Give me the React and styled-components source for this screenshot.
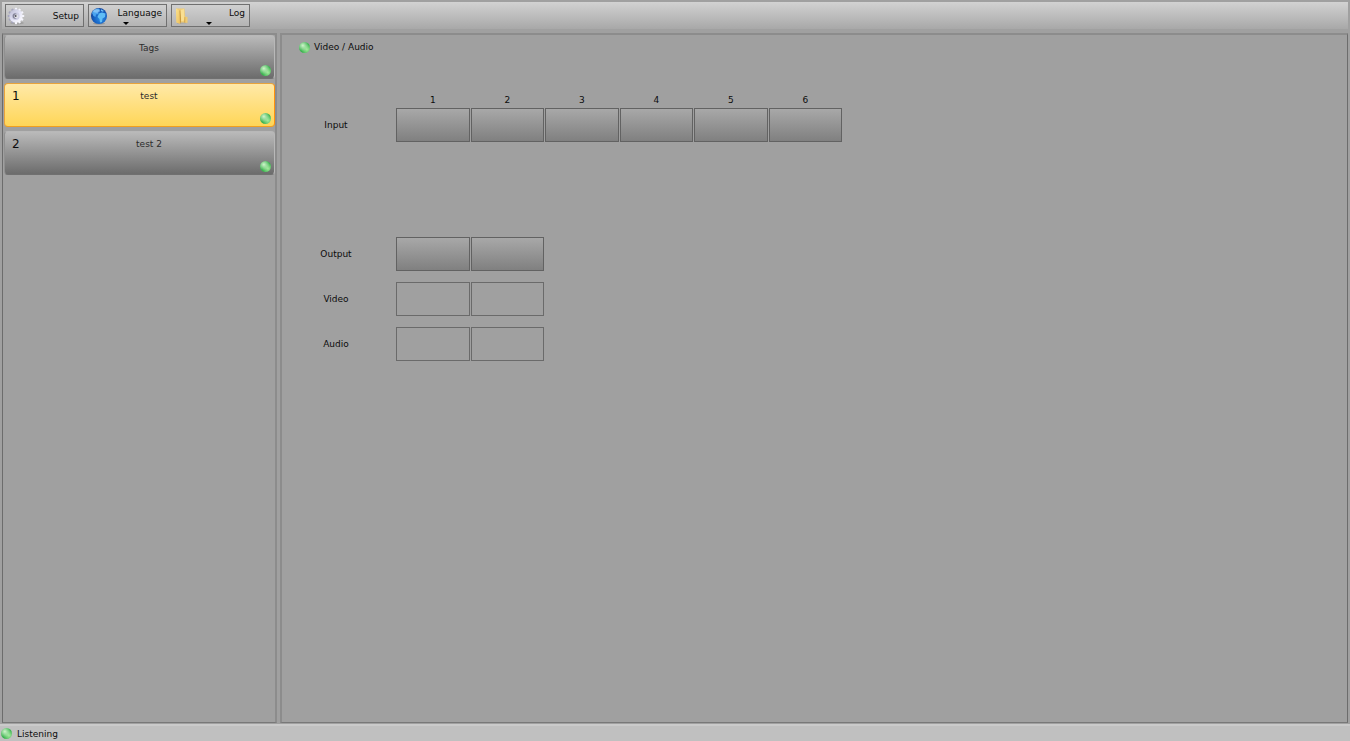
import React, { useState } from "react";
import styled, { createGlobalStyle, css } from "styled-components";

const GlobalStyle = createGlobalStyle`
  * {
    box-sizing: border-box;
  }
  body {
    margin: 0;
    background: #a0a0a0;
    color: #0c0c0c;
    font-family: Verdana, "DejaVu Sans", sans-serif;
    font-size: 9px;
    line-height: 12px;
  }
  button {
    font: inherit;
    color: inherit;
    cursor: pointer;
  }
`;

const tags = [
  { id: "tags", number: "", title: "Tags" },
  { id: "1", number: "1", title: "test" },
  { id: "2", number: "2", title: "test 2" },
];

const inputs = [1, 2, 3, 4, 5, 6];
const outputs = [1, 2];

function GearIcon() {
  const teeth = Array.from({ length: 12 }, (_, i) => i * 30);
  return (
    <svg width="18" height="18" viewBox="0 0 18 18">
      <defs>
        <linearGradient id="gear" x1="0" y1="0" x2="1" y2="1">
          <stop offset="0" stopColor="#b4b4cc" />
          <stop offset="0.5" stopColor="#e4e4f6" />
          <stop offset="1" stopColor="#ffffff" />
        </linearGradient>
      </defs>
      <ellipse cx="10" cy="16" rx="7" ry="1.5" fill="#8c8c8c" opacity="0.5" />
      {teeth.map((angle) => (
        <rect
          key={angle}
          x="7.9"
          y="0.8"
          width="2.2"
          height="4"
          rx="0.6"
          fill={angle > 190 ? "#a5a5bd" : "#f4f4fc"}
          transform={`rotate(${angle} 9 9)`}
        />
      ))}
      <circle cx="9" cy="9" r="6.7" fill="url(#gear)" />
      <circle cx="8.6" cy="9" r="4" fill="#cfcfe4" />
      <ellipse cx="8" cy="9" rx="2.4" ry="2.8" fill="#85859a" />
      <circle cx="9.2" cy="9.3" r="2" fill="#e2e2ea" />
      <circle cx="8.6" cy="9" r="1" fill="#55555f" />
    </svg>
  );
}

function GlobeIcon() {
  return (
    <svg width="18" height="18" viewBox="0 0 18 18">
      <defs>
        <radialGradient id="globe" cx="0.6" cy="0.65" r="0.65">
          <stop offset="0" stopColor="#2d8fe6" />
          <stop offset="0.6" stopColor="#1763c4" />
          <stop offset="1" stopColor="#113f94" />
        </radialGradient>
      </defs>
      <ellipse cx="9" cy="16.5" rx="6" ry="1.2" fill="#777" opacity="0.5" />
      <circle cx="9" cy="9" r="8" fill="url(#globe)" />
      <path d="M2 6C3 3 6 1.4 9 1.6L10 3 8 5 8.5 7 6 7.5 5.5 10 3.5 9Z" fill="#4ba4ef" />
      <path d="M9 6.5L12 5.5 15.5 6.5 15 10 12.5 11.5 12 15 10 15.5 9.5 12 7.5 10Z" fill="#5fbdf6" />
      <path d="M11 2.2L14 4 12.5 4.8 10.8 3.8Z" fill="#73c4fa" />
      <ellipse cx="6.5" cy="4" rx="3.4" ry="1.7" fill="#b4deff" opacity="0.5" />
    </svg>
  );
}

function FolderIcon() {
  return (
    <svg width="18" height="18" viewBox="0 0 18 18">
      <defs>
        <linearGradient id="folder" x1="0" y1="0" x2="1" y2="1">
          <stop offset="0" stopColor="#fbe38e" />
          <stop offset="1" stopColor="#edbf5c" />
        </linearGradient>
      </defs>
      <path d="M4 17L13 16.5 15 15 6 13Z" fill="#999" opacity="0.5" />
      <path d="M3 1.5L11.5 1.5 12 9.5 14.5 10 14.5 16 11 15.5 3.5 15.5Z" fill="#efcb74" />
      <path d="M3 1.5L6.5 3.5 7 17 3.5 15.5Z" fill="url(#folder)" />
      <path d="M6.5 3.5L7.6 3.2 8.2 14.5 7 17Z" fill="#c99a3f" />
      <path d="M7.6 3L11 2 11.3 13.5 8.2 14.5Z" fill="#fadf92" />
      <path d="M11.5 10L12.4 10.2 12.2 15.8 11 15.5Z" fill="#d5a950" />
    </svg>
  );
}

const App = () => {
  const [selected, setSelected] = useState("1");

  return (
    <Page>
      <GlobalStyle />
      <Toolbar>
        <ToolButton type="button">
          <GearIcon />
          <ToolLabel>Setup</ToolLabel>
        </ToolButton>
        <ToolButton type="button">
          <GlobeIcon />
          <ToolLabel $menu>Language</ToolLabel>
          <Arrow />
        </ToolButton>
        <ToolButton type="button">
          <FolderIcon />
          <ToolLabel $menu>Log</ToolLabel>
          <Arrow />
        </ToolButton>
      </Toolbar>

      <Workspace>
        <Sidebar>
          {tags.map(({ id, number, title }) => (
            <TagButton
              key={id}
              type="button"
              $active={selected === id}
              onClick={() => setSelected(id)}
            >
              <TagNumber>{number}</TagNumber>
              <TagTitle>{title}</TagTitle>
              <Led $end />
            </TagButton>
          ))}
        </Sidebar>

        <Main>
          <Heading>
            <Led />
            Video / Audio
          </Heading>

          <Matrix>
            <PortRow>
              <Numbers>
                {inputs.map((n) => (
                  <span key={n}>{n}</span>
                ))}
              </Numbers>
            </PortRow>
            <PortRow>
              <RowLabel>Input</RowLabel>
              <Ports>
                {inputs.map((n) => (
                  <PortButton key={n} type="button" aria-label={`Input ${n}`} />
                ))}
              </Ports>
            </PortRow>
          </Matrix>

          <OutputRows>
            <PortRow>
              <RowLabel>Output</RowLabel>
              <Ports>
                {outputs.map((n) => (
                  <PortButton key={n} type="button" aria-label={`Output ${n}`} />
                ))}
              </Ports>
            </PortRow>
            {["Video", "Audio"].map((name) => (
              <PortRow key={name}>
                <RowLabel>{name}</RowLabel>
                <Ports>
                  {outputs.map((n) => (
                    <PortStatus key={n} />
                  ))}
                </Ports>
              </PortRow>
            ))}
          </OutputRows>
        </Main>
      </Workspace>

      <StatusBar>
        <Led />
        Listening
      </StatusBar>
    </Page>
  );
};

const Page = styled.div`
  display: flex;
  flex-direction: column;
  min-height: 100vh;
  padding-top: 2px;
`;

const Toolbar = styled.header`
  display: flex;
  gap: 4px;
  margin: 0 2px;
  padding: 2px 3px;
  background: linear-gradient(#d2d2d2, #a8a8a8);
`;

const ToolButton = styled.button`
  display: grid;
  grid-template-columns: 18px 1fr;
  align-items: center;
  width: 79px;
  height: 23px;
  padding: 0 4px 0 1px;
  border: 1px solid #707070;
  background: linear-gradient(#d0d0d0, #b4b4b4);

  svg {
    grid-row: 1 / span 2;
    grid-column: 1;
  }
`;

const ToolLabel = styled.span`
  grid-row: ${({ $menu }) => ($menu ? "1" : "1 / span 2")};
  grid-column: 2;
  text-align: right;
`;

const Arrow = styled.span`
  grid-row: 2;
  grid-column: 1 / span 2;
  justify-self: center;
  border: 3px solid transparent;
  border-top-color: #000;
  border-bottom: 0;
`;

const Workspace = styled.div`
  display: flex;
  flex: 1;
  gap: 3px;
  padding: 4px 2px 1px;
`;

const panel = css`
  border: 1px solid #6c6c6c;
  border-top: 2px solid #8c8c8c;
  border-bottom-color: #787878;
`;

const Sidebar = styled.nav`
  ${panel}
  display: flex;
  flex-direction: column;
  gap: 4px;
  width: 275px;
  padding-left: 1px;
  border-right: 2px solid #8c8c8c;
`;

const TagButton = styled.button`
  display: grid;
  grid-template-columns: 1fr auto 1fr;
  grid-template-rows: 1fr auto;
  height: 44px;
  padding: 6px 3px 2px 7px;
  border: 1px solid;
  border-radius: 4px;
  border-color: ${({ $active }) =>
    $active ? "#e8a33c #ff920c #f0a020 #e8a33c" : "#b8b8b8 #b8b8b8 #707070 #909090"};
  background: ${({ $active }) =>
    $active ? "linear-gradient(#ffe9a8, #ffd657)" : "linear-gradient(#bababa, #6c6c6c)"};
  text-align: left;
`;

const TagNumber = styled.span`
  font-size: 12px;
`;

const TagTitle = styled.span`
  padding-left: 15px;
  color: #2c2c2c;
`;

const Led = styled.span`
  flex: none;
  width: 11px;
  height: 11px;
  border-radius: 50%;
  background: radial-gradient(circle at 35% 32%, #d0f5cb 0, rgba(160, 228, 155, 0) 55%),
    radial-gradient(circle at 72% 68%, #a4ea9c 0, rgba(130, 220, 125, 0) 50%), #3cb351;
  ${({ $end }) =>
    $end &&
    css`
      grid-row: 2;
      grid-column: 3;
      justify-self: end;
    `}
`;

const Main = styled.main`
  ${panel}
  flex: 1;
  min-width: 0;
  border-left: 2px solid #8c8c8c;
  padding: 6px 9px;
`;

const Heading = styled.h1`
  display: flex;
  align-items: center;
  gap: 4px;
  margin: 0;
  padding-left: 8px;
  font-size: 9px;
  font-weight: normal;
`;

const Matrix = styled.section`
  display: flex;
  flex-direction: column;
  gap: 2px;
  margin-top: 41px;
`;

const OutputRows = styled.section`
  display: flex;
  flex-direction: column;
  gap: 11px;
  margin-top: 95px;
`;

const PortRow = styled.div`
  display: grid;
  grid-template-columns: 90px 446px;
  column-gap: 15px;
  align-items: center;
`;

const RowLabel = styled.span`
  text-align: center;
`;

const Ports = styled.div`
  display: grid;
  grid-template-columns: repeat(6, 1fr);
  gap: 1px;
`;

const Numbers = styled(Ports)`
  grid-column: 2;
  text-align: center;
`;

const PortButton = styled.button`
  height: 34px;
  padding: 0;
  border: 1px solid #626262;
  background: linear-gradient(#a8a8a8, #808080);
`;

const PortStatus = styled.div`
  height: 34px;
  border: 1px solid #6a6a6a;
`;

const StatusBar = styled.footer`
  display: flex;
  align-items: center;
  gap: 5px;
  height: 17px;
  padding-left: 1px;
  border-top: 2px solid #cacaca;
  background: #c0c0c0;
`;

export default App;
